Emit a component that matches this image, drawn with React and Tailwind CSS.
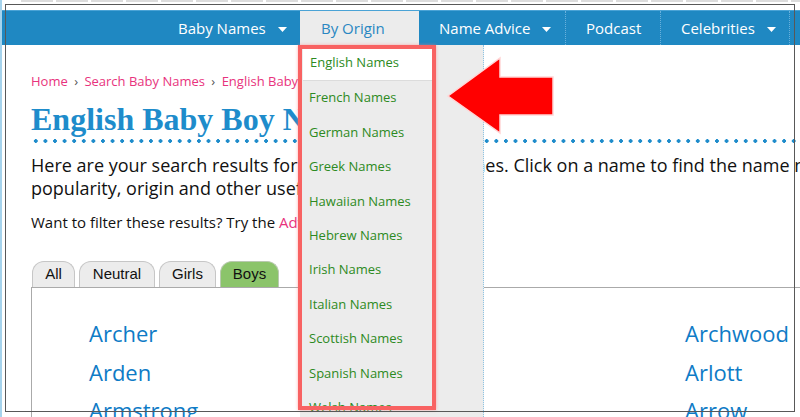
import React from "react";

function Caret() {
  return (
    <svg width="9" height="5" viewBox="0 0 9 5" className="ml-[12px] mt-[2px]">
      <polygon points="0,0 9,0 4.5,5" fill="white" />
    </svg>
  );
}

const origins = [
  "French Names",
  "German Names",
  "Greek Names",
  "Hawaiian Names",
  "Hebrew Names",
  "Irish Names",
  "Italian Names",
  "Scottish Names",
  "Spanish Names",
  "Welsh Names",
];

const col1 = ["Archer", "Arden", "Armstrong"];
const col2 = ["Arlo", "Arley", "Arno"];
const col3 = ["Archwood", "Arlott", "Arrow"];

export default function App() {
  return (
    <div className="relative w-[800px] h-[417px] overflow-hidden bg-white font-['Open_Sans',sans-serif]">
      <div className="flex h-full">
        <div className="w-[2px] shrink-0 bg-[#a6d3ec]" />
        <div className="flex-1 flex flex-col min-w-0">
          <div className="h-[10px] shrink-0" />
          {/* nav */}
          <nav className="h-[35px] shrink-0 flex justify-end pr-[10px] bg-[#1f88c2] border-t border-[#4aa3d6] text-white text-[15px]">
            <div className="w-[142px] flex items-center pl-[20px]">
              <span>Baby Names</span>
              <Caret />
            </div>
            <div className="w-[119px] flex items-center pl-[21px] bg-[#ececec] text-[#2a87c2]">
              <span>By Origin</span>
            </div>
            <div className="w-[147px] flex items-center pl-[20px] border-r border-dotted border-[#6ab1dc]">
              <span>Name Advice</span>
              <Caret />
            </div>
            <div className="w-[95px] flex items-center pl-[20px] border-r border-dotted border-[#6ab1dc]">
              <span>Podcast</span>
            </div>
            <div className="w-[129px] flex items-center pl-[20px] border-r border-dotted border-[#6ab1dc]">
              <span>Celebrities</span>
              <Caret />
            </div>
          </nav>

          {/* content */}
          <div className="pl-[29px] w-[1000px]">
            <div className="mt-[27px] h-[18px] leading-[18px] text-[13px] text-[#e8337d] whitespace-nowrap">
              Home <span className="text-[#555] mx-[3px]">›</span> Search Baby Names{" "}
              <span className="text-[#555] mx-[3px]">›</span> English Baby Boy Names
            </div>
            <h1 className="mt-[10px] h-[38px] leading-[38px] text-[32px] font-bold text-[#1e8ccb] font-['Liberation_Serif',serif] whitespace-nowrap">
              English Baby Boy Names
            </h1>
            <div className="mt-[1px] h-[4px] w-[800px] bg-[radial-gradient(circle,#1e8ccb_1.6px,transparent_2.1px)] bg-[length:9.6px_4px] bg-repeat-x" />
            <p className="mt-[11px] text-[18px] leading-[23px] text-[#111]">
              <span className="block whitespace-nowrap">
                Here are your search results for English baby boy names. Click on a name to find the name meaning,
              </span>
              <span className="block whitespace-nowrap">popularity, origin and other useful information.</span>
            </p>
            <p className="mt-[12px] text-[15px] leading-[20px] text-[#111] whitespace-nowrap">
              Want to filter these results? Try the <span className="text-[#e8337d]">Advanced Search</span>.
            </p>

            {/* tabs */}
            <div className="mt-[29px] flex items-end gap-[4px] pl-[1px] font-['Liberation_Sans',sans-serif] text-[15px] text-[#111]">
              <div className="w-[43px] h-[26px] flex items-center justify-center bg-[#ececec] border border-b-0 border-[#c6c6c6] rounded-t-[12px]">All</div>
              <div className="w-[76px] h-[26px] flex items-center justify-center bg-[#ececec] border border-b-0 border-[#c6c6c6] rounded-t-[12px]">Neutral</div>
              <div className="w-[57px] h-[26px] flex items-center justify-center bg-[#ececec] border border-b-0 border-[#c6c6c6] rounded-t-[12px]">Girls</div>
              <div className="w-[59px] h-[26px] flex items-center justify-center bg-[#8bc46a] border border-b-0 border-[#b9c9b0] rounded-t-[12px]">Boys</div>
            </div>
            <div className="border border-[#aaa] h-[200px] pt-[26px] pl-[57px] grid grid-cols-[298px_298px_298px] text-[22px] leading-[38.5px] text-[#0e7bc6]">
              <div className="flex flex-col">{col1.map((n) => <span key={n}>{n}</span>)}</div>
              <div className="flex flex-col">{col2.map((n) => <span key={n}>{n}</span>)}</div>
              <div className="flex flex-col">{col3.map((n) => <span key={n}>{n}</span>)}</div>
            </div>
          </div>
        </div>
      </div>

      {/* top gray strip */}
      <div className="absolute left-[21px] top-0 right-0 h-[2px] bg-[repeating-linear-gradient(90deg,#dcdcdc_0_32px,transparent_32px_35px)]" />

      {/* dropdown */}
      <div className="absolute left-[300px] top-[45px] w-[184px] bottom-0 bg-[#ececec] border-r border-dotted border-[#8cc4e4] text-[13px] text-[#2c8a22]">
        <div className="w-[133px] ml-[3px] h-[36px] flex items-center pl-[7px] bg-white border-b border-[#dcdcdc]">English Names</div>
        {origins.map((o) => (
          <div key={o} className="h-[34.4px] flex items-center pl-[9px]">{o}</div>
        ))}
      </div>

      {/* red highlight box */}
      <div className="absolute left-[298px] top-[45px] w-[138px] h-[365px] border-[4px] border-[#f86262] shadow-[0_0_3px_rgba(255,120,120,0.6)] pointer-events-none" />

      {/* red arrow */}
      <svg className="absolute left-[444px] top-[54px] pointer-events-none" width="114" height="84" viewBox="0 0 114 84">
        <polygon points="4,42 56,4 56,23 109,23 109,61 56,61 56,79" fill="#ff0000" stroke="#ffd6d6" strokeWidth="1.5" strokeLinejoin="miter" />
      </svg>

      {/* frame overlay */}
      <div className="absolute left-[5px] top-[4px] w-[790px] h-[408px] border-[1.5px] border-[#585858] pointer-events-none" />
    </div>
  );
}
